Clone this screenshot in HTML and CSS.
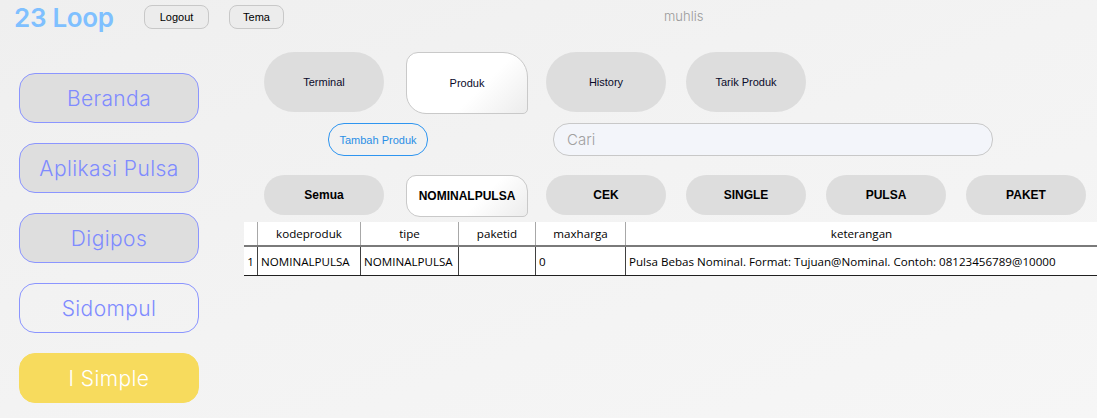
FILE: index.html
```html
<!DOCTYPE html>
<html lang="en">
<head>
    <meta charset="UTF-8">
    <title>23 Loop</title>
    <link rel="stylesheet" href="styles.css">
</head>
<body>
    <div class="header">
        <div class="logo">23 Loop</div>
        <button class="top-btn logout">Logout</button>
        <button class="top-btn tema">Tema</button>
        <div class="user">muhlis</div>
    </div>
    <div class="main">
        <div class="sidebar">
            <div class="menu">Beranda</div>
            <div class="menu">Aplikasi Pulsa</div>
            <div class="menu">Digipos</div>
            <div class="menu clear">Sidompul</div>
            <div class="menu active">I Simple</div>
        </div>
        <div class="content">
            <div class="tabs">
                <div class="tab">Terminal</div>
                <div class="tab selected">Produk</div>
                <div class="tab">History</div>
                <div class="tab">Tarik Produk</div>
            </div>
            <div class="tools">
                <button class="add">Tambah Produk</button>
                <div class="search">Cari</div>
            </div>
            <div class="filters">
                <div class="filter">Semua</div>
                <div class="filter selected">NOMINALPULSA</div>
                <div class="filter">CEK</div>
                <div class="filter">SINGLE</div>
                <div class="filter">PULSA</div>
                <div class="filter">PAKET</div>
            </div>
            <table class="grid">
                <thead>
                    <tr>
                        <th class="num"></th>
                        <th class="c1">kodeproduk</th>
                        <th class="c2">tipe</th>
                        <th class="c3">paketid</th>
                        <th class="c4">maxharga</th>
                        <th>keterangan</th>
                    </tr>
                </thead>
                <tbody>
                    <tr>
                        <td class="num">1</td>
                        <td>NOMINALPULSA</td>
                        <td>NOMINALPULSA</td>
                        <td></td>
                        <td>0</td>
                        <td>Pulsa Bebas Nominal. Format: Tujuan@Nominal. Contoh: 08123456789@10000</td>
                    </tr>
                </tbody>
            </table>
        </div>
    </div>
</body>
</html>
```

FILE: styles.css
```css
html, body {
    margin: 0;
    height: 100%;
}
body {
    background: linear-gradient(160deg, #efefef 0%, #f3f3f3 50%, #f6f6f6 100%);
    font-family: "Liberation Sans", Arial, sans-serif;
    overflow: hidden;
}
.header {
    display: flex;
    align-items: center;
    height: 36px;
}
.logo {
    margin-left: 14px;
    width: 130px;
    font-family: "Inter", sans-serif;
    font-size: 26px;
    font-weight: 600;
    color: #7fc0ff;
    letter-spacing: -0.3px;
    margin-top: -2px;
}
.top-btn {
    height: 24px;
    border: 1px solid #c8c8c8;
    border-radius: 8px;
    background: #ececec;
    font-family: "Liberation Sans", Arial, sans-serif;
    font-size: 11px;
    color: #000;
    padding: 0;
    margin-top: -2px;
}
.logout {
    width: 65px;
}
.tema {
    width: 55px;
    margin-left: 20px;
}
.user {
    margin-left: 380px;
    font-family: "Inter", sans-serif;
    font-weight: 300;
    font-size: 13px;
    color: #9a9a9a;
    margin-top: -4px;
}
.main {
    display: flex;
}
.sidebar {
    width: 244px;
    padding-top: 37px;
    display: flex;
    flex-direction: column;
    gap: 20px;
}
.menu {
    margin-left: 19px;
    width: 178px;
    height: 48px;
    border: 1px solid #8b95ff;
    border-radius: 16px;
    background: #dedede;
    color: #7f8bff;
    font-family: "Inter", sans-serif;
    font-size: 21px;
    font-weight: 300;
    letter-spacing: 0.4px;
    display: flex;
    align-items: center;
    justify-content: center;
}
.menu.clear {
    background: transparent;
}
.menu.active {
    background: #f7db5d;
    border-color: #f7db5d;
    color: #fff;
}
.content {
    flex: 1;
    padding-top: 16px;
}
.tabs, .filters {
    display: flex;
    gap: 20px;
    padding-left: 20px;
}
.tab, .filter {
    width: 120px;
    height: 60px;
    border-radius: 30px;
    background: #dddddd;
    font-size: 11px;
    color: #0a0a2a;
    display: flex;
    align-items: center;
    justify-content: center;
}
.tab.selected, .filter.selected {
    box-sizing: border-box;
    width: 122px;
    height: 62px;
    margin: 0 -2px 0 2px;
    border: 1px solid #c9c9c9;
    border-radius: 12px 25px 5px 20px;
    background: linear-gradient(135deg, #ffffff 60%, #ececec 100%);
}
.tools {
    display: flex;
    align-items: center;
    margin-top: 9px;
    height: 33px;
}
.add {
    margin-left: 84px;
    width: 100px;
    height: 33px;
    border: 1px solid #2e95f0;
    border-radius: 16px;
    background: transparent;
    color: #2a8fe6;
    font-family: "Liberation Sans", Arial, sans-serif;
    font-size: 11px;
    padding: 0;
}
.search {
    box-sizing: border-box;
    margin-left: 125px;
    width: 440px;
    height: 33px;
    border: 1px solid #c8c8c8;
    border-radius: 16px;
    background: #f3f5fa;
    color: #a0a0a0;
    font-family: "Inter", sans-serif;
    font-weight: 300;
    font-size: 15px;
    padding-left: 13px;
    display: flex;
    align-items: center;
}
.filters {
    margin-top: 19px;
}
.filter {
    height: 40px;
    border-radius: 20px;
    font-size: 12px;
    font-weight: bold;
    color: #000;
}
.filter.selected {
    height: 42px;
    border-radius: 10px 16px 5px 14px;
}
.grid {
    margin-top: 5px;
    width: 100%;
    border-collapse: collapse;
    background: #ffffff;
    font-family: "Open Sans", sans-serif;
    font-size: 11.6px;
    color: #000;
}
.grid th {
    height: 23px;
    padding: 0;
    font-weight: normal;
    border-left: 1px solid #a8a8a8;
    border-bottom: 2px solid #7a7a7a;
}
.grid th.num {
    border-left: none;
}
.grid td {
    height: 28px;
    padding: 0 3px;
    border-left: 1px solid #404040;
    border-bottom: 1px solid #202020;
    white-space: nowrap;
}
.grid td.num {
    border-left: none;
    padding: 0;
    text-align: center;
}
.num {
    width: 13px;
}
.c1 {
    width: 102px;
}
.c2 {
    width: 97px;
}
.c3 {
    width: 76px;
}
.c4 {
    width: 89px;
}
```
